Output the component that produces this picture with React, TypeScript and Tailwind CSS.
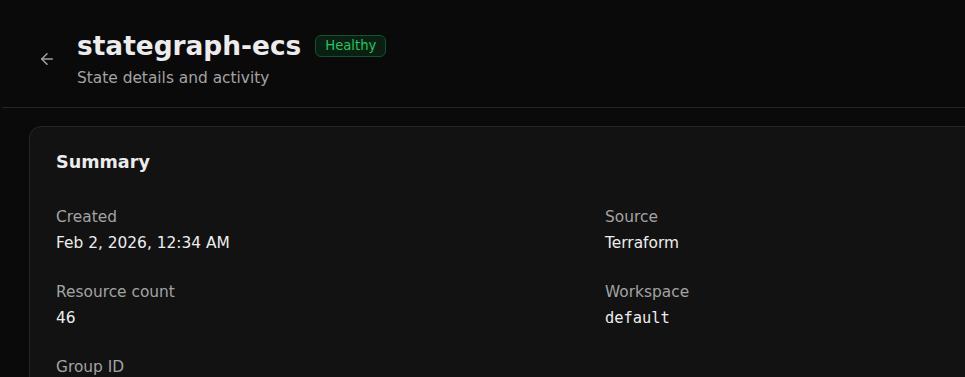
import { ArrowLeft } from 'lucide-react';

const fields = [
  { label: 'Created', value: 'Feb 2, 2026, 12:34 AM' },
  { label: 'Source', value: 'Terraform' },
  { label: 'Resource count', value: '46' },
  { label: 'Workspace', value: 'default', mono: true },
];

export default function App() {
  return (
    <div className="min-h-screen w-full overflow-hidden bg-[#0a0a0a] pl-[2px] text-[#ededed] font-['DejaVu_Sans',sans-serif]">
      <header className="flex items-center gap-[13px] border-b border-[#262626] pl-[27px] pt-[28px] pb-[18px]">
        <button className="flex h-[35px] w-[35px] items-center justify-center rounded-md text-[#a3a3a3]">
          <ArrowLeft size={18} strokeWidth={2} />
        </button>
        <div>
          <div className="flex items-center gap-[14px]">
            <h1 className="text-[26.4px] leading-[35px] font-bold text-[#ececec]">stategraph-ecs</h1>
            <span className="flex h-[22px] items-center rounded-[6px] border border-[#14532d] bg-[#052e16]/60 px-[9px] text-[13.2px] text-[#22c55e]">
              Healthy
            </span>
          </div>
          <p className="mt-[4px] text-[15.4px] leading-[22px] text-[#a3a3a3]">State details and activity</p>
        </div>
      </header>

      <main className="px-[27px] pt-[18px]">
        <div className="w-[1126px] rounded-[12px] border border-[#262626] bg-[#121212] px-[26px] pt-[22px] pb-[26px]">
          <h2 className="text-[17.6px] leading-[26px] font-bold text-[#ececec]">Summary</h2>
          <div className="mt-[31px] grid grid-cols-2 gap-x-[26px] gap-y-[27px]">
            {fields.map((f) => (
              <div key={f.label}>
                <div className="text-[15.4px] leading-[22px] text-[#a3a3a3]">{f.label}</div>
                <div
                  className={
                    f.mono
                      ? "mt-[4px] text-[15.4px] leading-[22px] text-[#ededed] font-['DejaVu_Sans_Mono',monospace]"
                      : 'mt-[4px] text-[15.4px] leading-[22px] text-[#ededed]'
                  }
                >
                  {f.value}
                </div>
              </div>
            ))}
            <div className="col-span-2">
              <div className="text-[15.4px] leading-[22px] text-[#a3a3a3]">Group ID</div>
            </div>
          </div>
        </div>
      </main>
    </div>
  );
}
